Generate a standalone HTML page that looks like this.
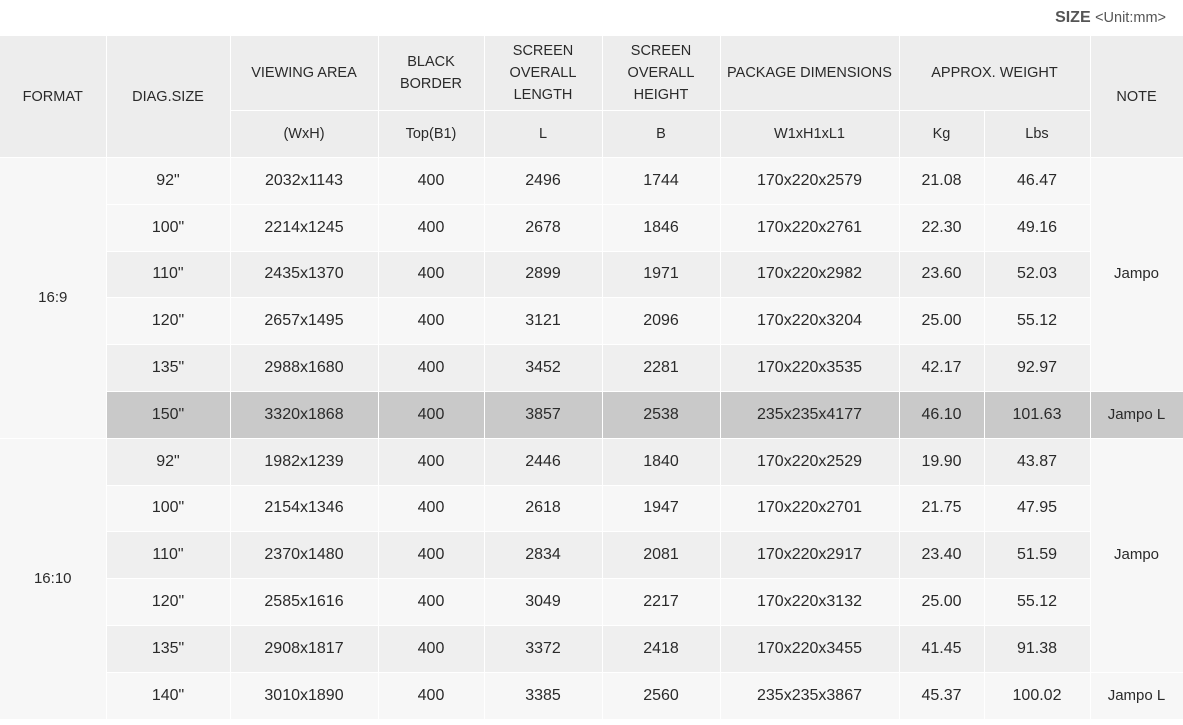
<!DOCTYPE html>
<html><head><meta charset="utf-8"><style>
html,body{margin:0;padding:0;background:#fff;width:1183px;height:725px;overflow:hidden}
body{font-family:"Liberation Sans","DejaVu Sans",sans-serif;color:#2a2a2a}
.cap{position:absolute;right:17px;top:9px;font-size:16px;color:#555;font-weight:bold}
.cap span{font-size:14.5px;font-weight:normal}
table{position:absolute;left:0;top:35px;border-collapse:collapse;table-layout:fixed;width:1183px}
td,th{border:1px solid #fff;text-align:center;font-weight:normal;padding:0;line-height:22px}
th{background:#ededed;font-size:14.5px}
td{font-size:16px}
tr.h1 th{height:74px}
tr.h2 th{height:46px}
td{height:45.8px;background:#f7f7f7}
tr.d td{background:#efefef}
tr.hl td{background:#c9c9c9}
td.w{background:#f7f7f7 !important;font-size:15px}
td.n{font-size:15px}
table tr > *:first-child{border-left:none}
</style></head><body>
<div class="cap">SIZE <span>&lt;Unit:mm&gt;</span></div>
<table>
<colgroup><col style="width:106px"><col style="width:124px"><col style="width:148px"><col style="width:106px"><col style="width:118px"><col style="width:118px"><col style="width:179px"><col style="width:85px"><col style="width:106px"><col style="width:93px"></colgroup>
<tr class="h1"><th rowspan="2">FORMAT</th><th rowspan="2">DIAG.SIZE</th><th>VIEWING AREA</th><th>BLACK<br>BORDER</th><th>SCREEN<br>OVERALL<br>LENGTH</th><th>SCREEN<br>OVERALL<br>HEIGHT</th><th>PACKAGE DIMENSIONS</th><th colspan="2">APPROX. WEIGHT</th><th rowspan="2">NOTE</th></tr>
<tr class="h2"><th>(WxH)</th><th>Top(B1)</th><th>L</th><th>B</th><th>W1xH1xL1</th><th>Kg</th><th>Lbs</th></tr>
<tr><td rowspan="6" class="w">16:9</td><td>92"</td><td>2032x1143</td><td>400</td><td>2496</td><td>1744</td><td>170x220x2579</td><td>21.08</td><td>46.47</td><td rowspan="5" class="w">Jampo</td></tr>
<tr><td>100"</td><td>2214x1245</td><td>400</td><td>2678</td><td>1846</td><td>170x220x2761</td><td>22.30</td><td>49.16</td></tr>
<tr class="d"><td>110"</td><td>2435x1370</td><td>400</td><td>2899</td><td>1971</td><td>170x220x2982</td><td>23.60</td><td>52.03</td></tr>
<tr><td>120"</td><td>2657x1495</td><td>400</td><td>3121</td><td>2096</td><td>170x220x3204</td><td>25.00</td><td>55.12</td></tr>
<tr class="d"><td>135"</td><td>2988x1680</td><td>400</td><td>3452</td><td>2281</td><td>170x220x3535</td><td>42.17</td><td>92.97</td></tr>
<tr class="hl"><td>150"</td><td>3320x1868</td><td>400</td><td>3857</td><td>2538</td><td>235x235x4177</td><td>46.10</td><td>101.63</td><td class="n">Jampo L</td></tr>
<tr class="d"><td rowspan="6" class="w">16:10</td><td>92"</td><td>1982x1239</td><td>400</td><td>2446</td><td>1840</td><td>170x220x2529</td><td>19.90</td><td>43.87</td><td rowspan="5" class="w">Jampo</td></tr>
<tr><td>100"</td><td>2154x1346</td><td>400</td><td>2618</td><td>1947</td><td>170x220x2701</td><td>21.75</td><td>47.95</td></tr>
<tr class="d"><td>110"</td><td>2370x1480</td><td>400</td><td>2834</td><td>2081</td><td>170x220x2917</td><td>23.40</td><td>51.59</td></tr>
<tr><td>120"</td><td>2585x1616</td><td>400</td><td>3049</td><td>2217</td><td>170x220x3132</td><td>25.00</td><td>55.12</td></tr>
<tr class="d"><td>135"</td><td>2908x1817</td><td>400</td><td>3372</td><td>2418</td><td>170x220x3455</td><td>41.45</td><td>91.38</td></tr>
<tr><td>140"</td><td>3010x1890</td><td>400</td><td>3385</td><td>2560</td><td>235x235x3867</td><td>45.37</td><td>100.02</td><td class="n">Jampo L</td></tr>
</table>
</body></html>
